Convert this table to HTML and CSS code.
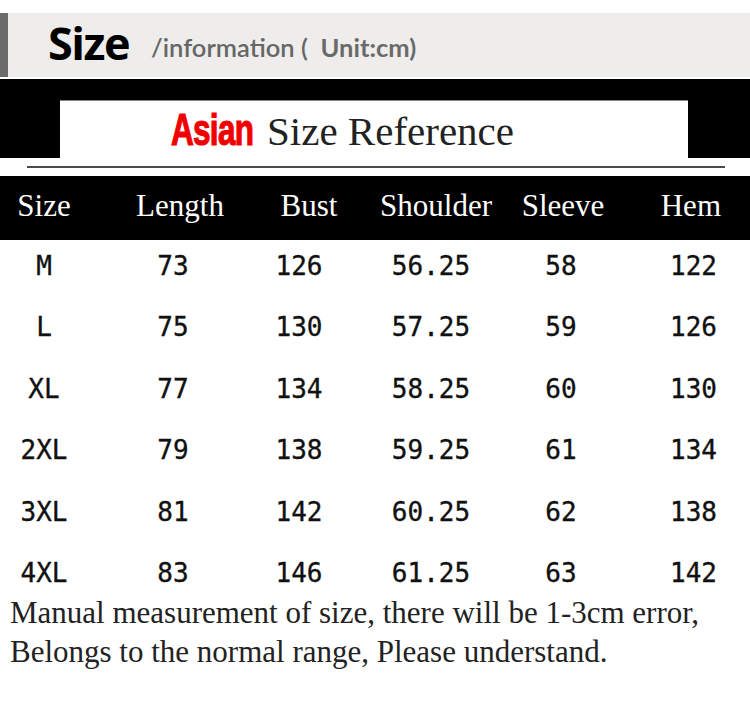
FILE: index.html
```html
<!DOCTYPE html>
<html lang="en">
<head>
<meta charset="utf-8">
<title>Size information</title>
<link rel="stylesheet" href="styles.css">
</head>
<body>
<div class="page">
  <div class="title-bar">
    <span class="title-main">Size</span>
    <span class="title-sub">/information (&nbsp; <b>Unit:cm)</b></span>
  </div>
  <div class="banner">
    <div class="banner-box">
      <span class="asian"><span class="asian-inner">Asian</span></span><span class="ref">Size Reference</span>
    </div>
  </div>
  <div class="rule-strip"><div class="rule"></div></div>
  <div class="thead">
    <div>Size</div><div>Length</div><div>Bust</div><div>Shoulder</div><div>Sleeve</div><div class="last">Hem</div>
  </div>
  <div class="tbody">
    <div class="row"><div>M</div><div>73</div><div>126</div><div>56.25</div><div>58</div><div class="last">122</div></div>
    <div class="row"><div>L</div><div>75</div><div>130</div><div>57.25</div><div>59</div><div class="last">126</div></div>
    <div class="row"><div>XL</div><div>77</div><div>134</div><div>58.25</div><div>60</div><div class="last">130</div></div>
    <div class="row"><div>2XL</div><div>79</div><div>138</div><div>59.25</div><div>61</div><div class="last">134</div></div>
    <div class="row"><div>3XL</div><div>81</div><div>142</div><div>60.25</div><div>62</div><div class="last">138</div></div>
    <div class="row"><div>4XL</div><div>83</div><div>146</div><div>61.25</div><div>63</div><div class="last">142</div></div>
  </div>
  <div class="note">
    <p>Manual measurement of size, there will be 1-3cm error,</p>
    <p>Belongs to the normal range, Please understand.</p>
  </div>
</div>
</body>
</html>
```
FILE: styles.css
```css
html, body {
  margin: 0;
  padding: 0;
  background: #ffffff;
}
.page {
  width: 750px;
  overflow: hidden;
}
.title-bar {
  margin-top: 13px;
  height: 64px;
  box-sizing: border-box;
  background: #eeedeb;
  border-left: 8px solid #6b6b6b;
  padding-left: 40px;
  white-space: nowrap;
}
.title-main {
  font-family: "Open Sans", sans-serif;
  font-weight: 700;
  font-size: 45px;
  line-height: 59px;
  letter-spacing: -1.5px;
  color: #000;
}
.title-sub {
  margin-left: 18px;
  font-family: "Lato", sans-serif;
  font-weight: 600;
  font-size: 25.5px;
  color: #666;
  vertical-align: 3px;
}
.title-sub b {
  font-weight: 700;
  color: #6a6a6a;
}
.banner {
  margin-top: 2px;
  height: 79px;
  box-sizing: border-box;
  background: #000;
  padding-top: 21px;
}
.banner-box {
  margin-left: 60px;
  width: 628px;
  height: 58px;
  box-sizing: border-box;
  background: #fff;
  padding-left: 111px;
  line-height: 58px;
  white-space: nowrap;
  border-top: 1px solid #888;
}
.asian {
  display: inline-block;
  width: 87px;
  margin-right: 9px;
  vertical-align: baseline;
}
.asian-inner {
  display: inline-block;
  font-family: "Liberation Sans", sans-serif;
  font-weight: 700;
  font-size: 45px;
  color: #f10000;
  -webkit-text-stroke: 1.2px #f10000;
  transform: scaleX(0.7);
  transform-origin: left center;
  letter-spacing: -1px;
}
.ref {
  font-family: "Liberation Serif", serif;
  font-size: 41px;
  color: #222;
}
.rule-strip {
  height: 18px;
  padding-top: 8px;
  box-sizing: border-box;
}
.rule {
  margin-left: 27px;
  width: 698px;
  height: 2px;
  background: #4a4a4a;
}
.thead {
  height: 64px;
  box-sizing: border-box;
  background: #000;
  color: #fff;
  display: grid;
  grid-template-columns: 88px 184px 74px 180px 74px 150px;
  justify-items: center;
  font-family: "Liberation Serif", serif;
  font-size: 31px;
  line-height: 59px;
  padding-bottom: 5px;
  white-space: nowrap;
}
.thead .last {
  justify-self: end;
  padding-right: 29px;
}
.tbody {
  padding-top: 11px;
  display: flex;
  flex-direction: column;
  gap: 31.4px;
}
.row {
  display: grid;
  grid-template-columns: 88px 170px 82px 182px 78px 150px;
  justify-items: center;
  font-family: "DejaVu Sans Mono", monospace;
  font-size: 26px;
  line-height: 30px;
  color: #111;
  -webkit-text-stroke: 0.35px #111;
  white-space: nowrap;
}
.row .last {
  justify-self: end;
  padding-right: 33px;
}
.note {
  margin-top: 5px;
  padding-left: 10px;
  font-family: "Liberation Serif", serif;
  font-size: 31px;
  line-height: 39px;
  color: #222;
}
.note p {
  margin: 0;
  white-space: nowrap;
}
```
